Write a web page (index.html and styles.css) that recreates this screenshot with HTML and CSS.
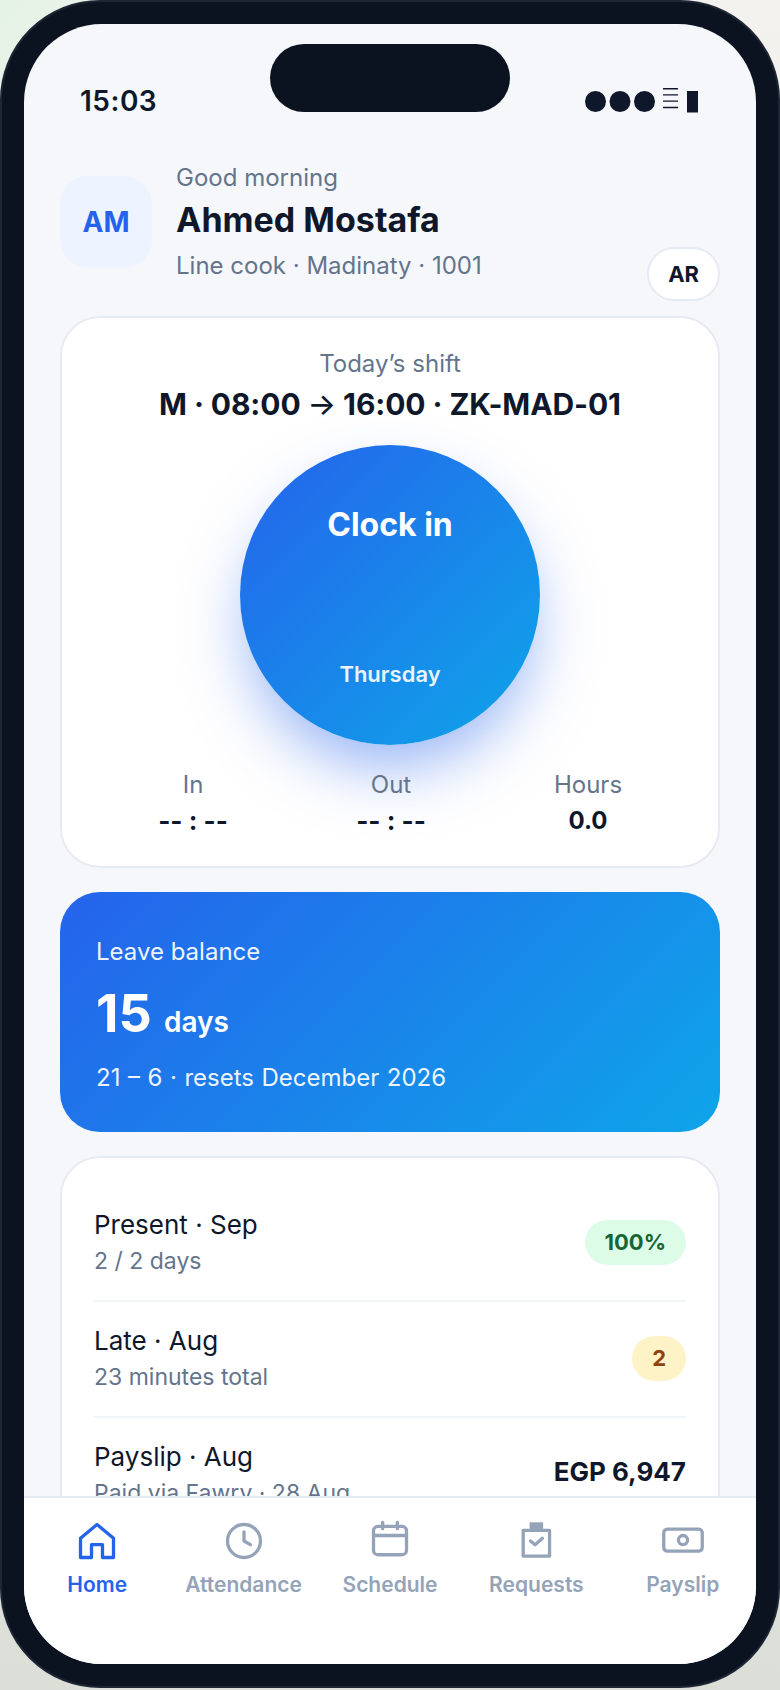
FILE: index.html
```html
<!DOCTYPE html>
<html lang="en">
<head>
  <meta charset="UTF-8" />
  <title>Home</title>
  <link rel="stylesheet" href="styles.css">
</head>
<body>
  <div class="phone">
    <div class="notch"></div>
    <div class="screen">
      <div class="status">
        <span class="time">15:03</span>
        <svg class="signal" viewBox="0 0 113 25">
          <circle cx="10.5" cy="13.5" r="10.5"/>
          <circle cx="35" cy="13.5" r="10.5"/>
          <circle cx="59.5" cy="13.5" r="10.5"/>
          <path d="M78 0h15v1.4H78zM78 6.2h15v1.4H78zM78 12.4h15v1.4H78zM78 18.8h15v1.4H78z"/>
          <rect x="102" y="3" width="11" height="21.5"/>
        </svg>
      </div>

      <div class="head">
        <div class="avatar">AM</div>
        <div class="who">
          <div class="muted">Good morning</div>
          <div class="name">Ahmed Mostafa</div>
          <div class="muted">Line cook · Madinaty · 1001</div>
        </div>
        <div class="lang">AR</div>
      </div>

      <div class="card shift">
        <div class="muted">Today’s shift</div>
        <div class="shift-title">M · 08:00 <span class="arrow">→</span> 16:00 · ZK-MAD-01</div>
        <div class="clock-btn">
          <div class="clock-label">Clock in</div>
          <div class="clock-day">Thursday</div>
        </div>
        <div class="stats">
          <div><div class="muted">In</div><div class="stat-val empty">-- : --</div></div>
          <div><div class="muted">Out</div><div class="stat-val empty">-- : --</div></div>
          <div><div class="muted">Hours</div><div class="stat-val">0.0</div></div>
        </div>
      </div>

      <div class="leave">
        <div class="leave-label">Leave balance</div>
        <div class="leave-num">15 <span class="leave-unit">days</span></div>
        <div class="leave-label leave-reset">21 – 6 · resets December 2026</div>
      </div>

      <div class="card list">
        <div class="row">
          <div><div class="row-title">Present · Sep</div><div class="row-sub">2 / 2 days</div></div>
          <div class="pill green">100%</div>
        </div>
        <div class="row">
          <div><div class="row-title">Late · Aug</div><div class="row-sub">23 minutes total</div></div>
          <div class="pill amber">2</div>
        </div>
        <div class="row">
          <div><div class="row-title">Payslip · Aug</div><div class="row-sub">Paid via Fawry · 28 Aug</div></div>
          <div class="amount">EGP 6,947</div>
        </div>
      </div>

      <div class="tabs">
        <div class="tab active">
          <svg viewBox="0 0 24 24"><path d="M3 10.5 12 3l9 7.5V21h-6v-7H9v7H3z"/></svg>
          <span>Home</span>
        </div>
        <div class="tab">
          <svg viewBox="0 0 24 24"><circle cx="12" cy="12" r="9"/><path d="M12 7v5l3.5 2"/></svg>
          <span>Attendance</span>
        </div>
        <div class="tab">
          <svg viewBox="0 0 24 24"><rect x="3" y="4" width="18" height="15.5" rx="2.5"/><path d="M3 9h18M8 1.8v3.5M16 1.8v3.5"/></svg>
          <span>Schedule</span>
        </div>
        <div class="tab">
          <svg viewBox="0 0 24 24"><path d="M5 6.2h14.4v14H5z"/><rect class="clip" x="8.5" y="1.8" width="7.4" height="4"/><path d="M9 12l2.5 2 4-3.5"/></svg>
          <span>Requests</span>
        </div>
        <div class="tab">
          <svg viewBox="0 0 24 24"><rect x="1.5" y="5.5" width="21" height="12" rx="2"/><circle cx="12" cy="11.5" r="2.5"/></svg>
          <span>Payslip</span>
        </div>
      </div>
    </div>
  </div>
</body>
</html>
```
FILE: styles.css
```css
* {
  box-sizing: border-box;
}
body {
  font-family: 'Inter', sans-serif;
  margin: 0;
  height: 1690px;
  overflow: hidden;
  background: radial-gradient(circle at 0 0, #e3f3e4, transparent 170px), linear-gradient(#f3f2ee, #dcdfd7);
  color: #0f172a;
}
.phone {
  position: relative;
  width: 780px;
  height: 1688px;
  padding: 22px;
  background: #0b1320;
  border: 2px solid #1e2635;
  border-radius: 100px;
}
.notch {
  position: absolute;
  top: 42px;
  left: 268px;
  width: 240px;
  height: 68px;
  border-radius: 34px;
  background: #0b1320;
  z-index: 3;
}
.screen {
  position: relative;
  height: 100%;
  padding: 0 36px;
  overflow: hidden;
  background: #f5f7fb;
  border-radius: 78px;
}
.status {
  display: flex;
  justify-content: space-between;
  align-items: center;
  height: 60px;
  margin-top: 46px;
  padding: 0 22px 0 20px;
  font-size: 28px;
  font-weight: 600;
}
.time {
  padding-top: 2px;
  letter-spacing: 0.5px;
}
.signal {
  width: 113px;
  height: 25px;
  margin-top: 1px;
  fill: #0f172a;
}
.head {
  display: flex;
  align-items: center;
  gap: 24px;
  margin-top: 33px;
}
.avatar {
  display: flex;
  align-items: center;
  justify-content: center;
  width: 92px;
  height: 92px;
  border-radius: 28px;
  background: #eef4ff;
  color: #2563eb;
  font-size: 28px;
  font-weight: 700;
}
.who {
  flex: 1;
}
.muted {
  color: #64748b;
  font-size: 24px;
}
.name {
  font-size: 34px;
  font-weight: 700;
  margin: 7px 0 11px;
}
.lang {
  align-self: flex-end;
  margin-bottom: -21px;
  padding: 12px 19px;
  background: #fff;
  border: 2px solid #e6eaf3;
  border-radius: 27px;
  font-size: 22px;
  font-weight: 700;
}
.card {
  background: #fff;
  border: 2px solid #e6eaf3;
  border-radius: 40px;
}
.shift {
  margin-top: 36px;
  padding: 31px 32px 31px;
  text-align: center;
}
.shift-title {
  font-size: 30px;
  font-weight: 700;
  margin-top: 8px;
  letter-spacing: -0.1px;
}
.arrow {
  font-weight: 500;
}
.clock-btn {
  display: flex;
  flex-direction: column;
  justify-content: space-between;
  align-items: center;
  width: 300px;
  height: 300px;
  margin: 23px auto 0;
  padding: 60px 0 58px;
  border-radius: 50%;
  background: linear-gradient(135deg, #2563eb, #0ea5e9);
  box-shadow: 0 30px 64px -10px rgba(37, 99, 235, 0.5);
  color: #fff;
}
.clock-label {
  font-size: 32px;
  font-weight: 700;
}
.clock-day {
  font-size: 22px;
  font-weight: 600;
  opacity: 0.9;
}
.stats {
  display: grid;
  grid-template-columns: 198px 198px 196px;
  margin-top: 25px;
}
.stat-val {
  font-size: 24px;
  line-height: 29px;
  font-weight: 700;
  margin-top: 7px;
}
.stat-val.empty {
  font-size: 26px;
}
.leave {
  margin-top: 24px;
  padding: 45px 36px 40px;
  border-radius: 40px;
  background: linear-gradient(135deg, #2563eb, #0ea5e9);
  color: #fff;
}
.leave-label {
  font-size: 24px;
  opacity: 0.92;
}
.leave-reset {
  word-spacing: 0.8px;
}
.leave-num {
  font-size: 52px;
  font-weight: 700;
  margin: 16px 0 18px;
}
.leave-unit {
  font-size: 28px;
  font-weight: 600;
}
.list {
  margin-top: 24px;
  padding: 28px 32px;
}
.row {
  display: flex;
  justify-content: space-between;
  align-items: center;
  padding: 23px 0 25px;
  border-bottom: 2px solid #f1f5f9;
}
.row-title {
  font-size: 26px;
}
.row-sub {
  color: #64748b;
  font-size: 23px;
  margin-top: 7px;
}
.pill {
  padding: 9.5px 20px;
  border-radius: 23px;
  font-size: 22px;
  font-weight: 700;
}
.green {
  background: #dcfce7;
  color: #166534;
}
.amber {
  background: #fef3c7;
  color: #92400e;
}
.amount {
  margin-bottom: 5px;
  font-size: 26px;
  font-weight: 700;
}
.tabs {
  position: absolute;
  left: 0;
  right: 0;
  bottom: 0;
  display: grid;
  grid-template-columns: repeat(5, 1fr);
  height: 168px;
  padding-top: 21px;
  background: #fff;
  border-top: 2px solid #e6eaf3;
}
.tab {
  display: flex;
  flex-direction: column;
  align-items: center;
  gap: 9px;
  color: #94a3b8;
  font-size: 21px;
  font-weight: 600;
}
.tab.active {
  color: #2563eb;
}
.tab svg {
  width: 44px;
  height: 44px;
  fill: none;
  stroke: currentColor;
  stroke-width: 1.8;
  stroke-linejoin: round;
  stroke-linecap: round;
}
.tab .clip {
  fill: currentColor;
  stroke: none;
}
```
